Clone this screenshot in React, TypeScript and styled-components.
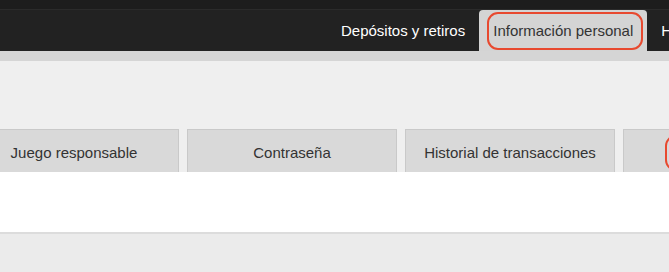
import React from "react";
import styled, { createGlobalStyle } from "styled-components";

const Global = createGlobalStyle`
  html, body { margin: 0; padding: 0; background: #ebebeb; overflow: hidden; }
  body { font-family: "Liberation Sans", Arial, sans-serif; }
`;

const Page = styled.div`
  width: 669px;
  height: 272px;
  overflow: hidden;
  display: flex;
  flex-direction: column;
  background: #ebebeb;
`;

const TopStrip = styled.div`
  height: 9px;
  background: #1d1d1d;
  border-bottom: 1px solid #2b2b2b;
`;

const NavBar = styled.nav`
  height: 41px;
  background: #222222;
  display: flex;
  align-items: stretch;
  white-space: nowrap;
  overflow: hidden;
`;

const NavList = styled.ul`
  list-style: none;
  margin: 0 0 0 327px;
  padding: 0;
  display: flex;
  align-items: stretch;
  flex-shrink: 0;
`;

const NavItem = styled.li<{ $active?: boolean }>`
  position: relative;
  display: flex;
  align-items: center;
  padding: 0 14px;
  font-size: 15px;
  color: ${(p) => (p.$active ? "#333333" : "#ffffff")};
  background: ${(p) => (p.$active ? "#d4d4d4" : "transparent")};
  border-radius: 4px 4px 0 0;
`;

const Highlight = styled.span<{ $l: number; $t: number; $r: number; $b: number }>`
  position: absolute;
  left: ${(p) => p.$l}px;
  top: ${(p) => p.$t}px;
  right: ${(p) => p.$r}px;
  bottom: ${(p) => p.$b}px;
  border: 2px solid #e8492f;
  border-radius: 11px;
  pointer-events: none;
`;

const Band = styled.div`
  height: 10px;
  background: #d5d5d5;
`;

const Hero = styled.div`
  height: 68px;
  background: #efefef;
`;

const TabRow = styled.div`
  height: 43px;
  display: flex;
  gap: 8px;
  margin-left: -31px;
  background: #efefef;
`;

const Tab = styled.div`
  position: relative;
  flex: 0 0 210px;
  box-sizing: border-box;
  border: 1px solid #c9c9c9;
  border-bottom: none;
  background: #d9d9d9;
  display: flex;
  align-items: center;
  justify-content: center;
  font-size: 15px;
  color: #333333;
  padding-top: 2px;
`;

const Content = styled.div`
  height: 60px;
  background: #ffffff;
  border-bottom: 2px solid #dcdcdc;
`;

const Footer = styled.div`
  flex: 1;
  background: #ebebeb;
`;

export default function App() {
  return (
    <>
      <Global />
      <Page>
        <TopStrip />
        <NavBar>
          <NavList>
            <NavItem>Depósitos y retiros</NavItem>
            <NavItem $active>
              Información personal
              <Highlight $l={8} $t={2} $r={4} $b={1} />
            </NavItem>
            <NavItem>Historial</NavItem>
          </NavList>
        </NavBar>
        <Band />
        <Hero />
        <TabRow>
          <Tab>Juego responsable</Tab>
          <Tab>Contraseña</Tab>
          <Tab>Historial de transacciones</Tab>
          <Tab>
            <Highlight $l={41} $t={5} $r={-80} $b={1} />
          </Tab>
        </TabRow>
        <Content />
        <Footer />
      </Page>
    </>
  );
}
